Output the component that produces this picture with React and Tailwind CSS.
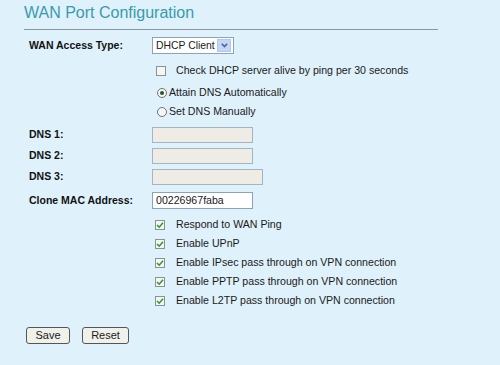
import React from "react";

function Check({ checked }) {
  return (
    <span className="w-[10px] h-[10px] border border-[#8b9196] bg-[#f4f6f4] flex items-center justify-center shrink-0">
      {checked && (
        <svg width="8" height="8" viewBox="0 0 8 8">
          <path d="M1 4 L3.2 6.2 L7 1.8" fill="none" stroke="#2f9b2f" strokeWidth="1.6" />
        </svg>
      )}
    </span>
  );
}

function Radio({ checked }) {
  return (
    <span className="w-[10px] h-[10px] rounded-full border border-[#6d7378] bg-[#f6f7f6] flex items-center justify-center shrink-0">
      {checked && <span className="w-[4px] h-[4px] rounded-full bg-[#245a24]" />}
    </span>
  );
}

const label = "text-[10.5px] font-bold text-[#111]";

export default function App() {
  const opts = [
    "Respond to WAN Ping",
    "Enable UPnP",
    "Enable IPsec pass through on VPN connection",
    "Enable PPTP pass through on VPN connection",
    "Enable L2TP pass through on VPN connection",
  ];

  return (
    <div className="w-[500px] h-[365px] bg-[#dff1fb] text-[#1a1a1a] font-['Liberation_Sans',Arial,sans-serif] text-[10.6px] whitespace-nowrap overflow-hidden">
      <div className="ml-[24px] w-[414px] h-[30px] border-b border-[#8b979f] pt-[3px]">
        <h1 className="text-[16px] leading-[20px] text-[#3a9bac]">WAN Port Configuration</h1>
      </div>

      <div className="pl-[29px]">
        {/* access type */}
        <div className="mt-[7px] h-[17px] flex items-center">
          <span className={`${label} w-[123px]`}>WAN Access Type:</span>
          <div className="w-[82px] h-[17px] border border-[#8aa3b8] bg-white flex items-center justify-between pl-[3px] pr-[2px]">
            <span className="text-[10.4px]">DHCP Client</span>
            <span className="w-[14px] h-[13px] bg-[#c3d5fa] border border-[#b3c6ee] flex items-center justify-center">
              <svg width="7" height="5" viewBox="0 0 7 5">
                <path d="M0.8 0.8 L3.5 3.6 L6.2 0.8" fill="none" stroke="#4d6185" strokeWidth="1.5" />
              </svg>
            </span>
          </div>
        </div>

        <div className="mt-[8px] h-[18px] flex items-center pl-[127px]">
          <Check />
          <span className="ml-[10px]">Check DHCP server alive by ping per 30 seconds</span>
        </div>

        <div className="mt-[4px] h-[18px] flex items-center pl-[128px]">
          <Radio checked />
          <span className="ml-[2px]">Attain DNS Automatically</span>
        </div>
        <div className="mt-[1px] h-[18px] flex items-center pl-[128px]">
          <Radio />
          <span className="ml-[2px]">Set DNS Manually</span>
        </div>

        {/* DNS */}
        <div className="mt-[6px] h-[16px] flex items-center">
          <span className={`${label} w-[123px]`}>DNS 1:</span>
          <div className="w-[101px] h-[16px] border border-[#a3b5c2] bg-[#eeece5]" />
        </div>
        <div className="mt-[5px] h-[16px] flex items-center">
          <span className={`${label} w-[123px]`}>DNS 2:</span>
          <div className="w-[101px] h-[16px] border border-[#a3b5c2] bg-[#eeece5]" />
        </div>
        <div className="mt-[5px] h-[16px] flex items-center">
          <span className={`${label} w-[123px]`}>DNS 3:</span>
          <div className="w-[111px] h-[16px] border border-[#a3b5c2] bg-[#eeece5]" />
        </div>
        <div className="mt-[7px] h-[17px] flex items-center">
          <span className={`${label} w-[123px]`}>Clone MAC Address:</span>
          <div className="w-[101px] h-[17px] border border-[#8aa3b8] bg-white flex items-center pl-[3px]">
            00226967faba
          </div>
        </div>

        <div className="mt-[6px]">
          {opts.map((o) => (
            <div key={o} className="h-[19px] flex items-center pl-[126px]">
              <Check checked />
              <span className="ml-[11px]">{o}</span>
            </div>
          ))}
        </div>
      </div>

      <div className="mt-[17px] ml-[26px] flex gap-[12px]">
        <button className="w-[44px] h-[17px] border border-[#555] rounded-[3px] bg-[#f1f1ec] text-[11px] leading-none">
          Save
        </button>
        <button className="w-[47px] h-[17px] border border-[#555] rounded-[3px] bg-[#f1f1ec] text-[11px] leading-none">
          Reset
        </button>
      </div>
    </div>
  );
}
